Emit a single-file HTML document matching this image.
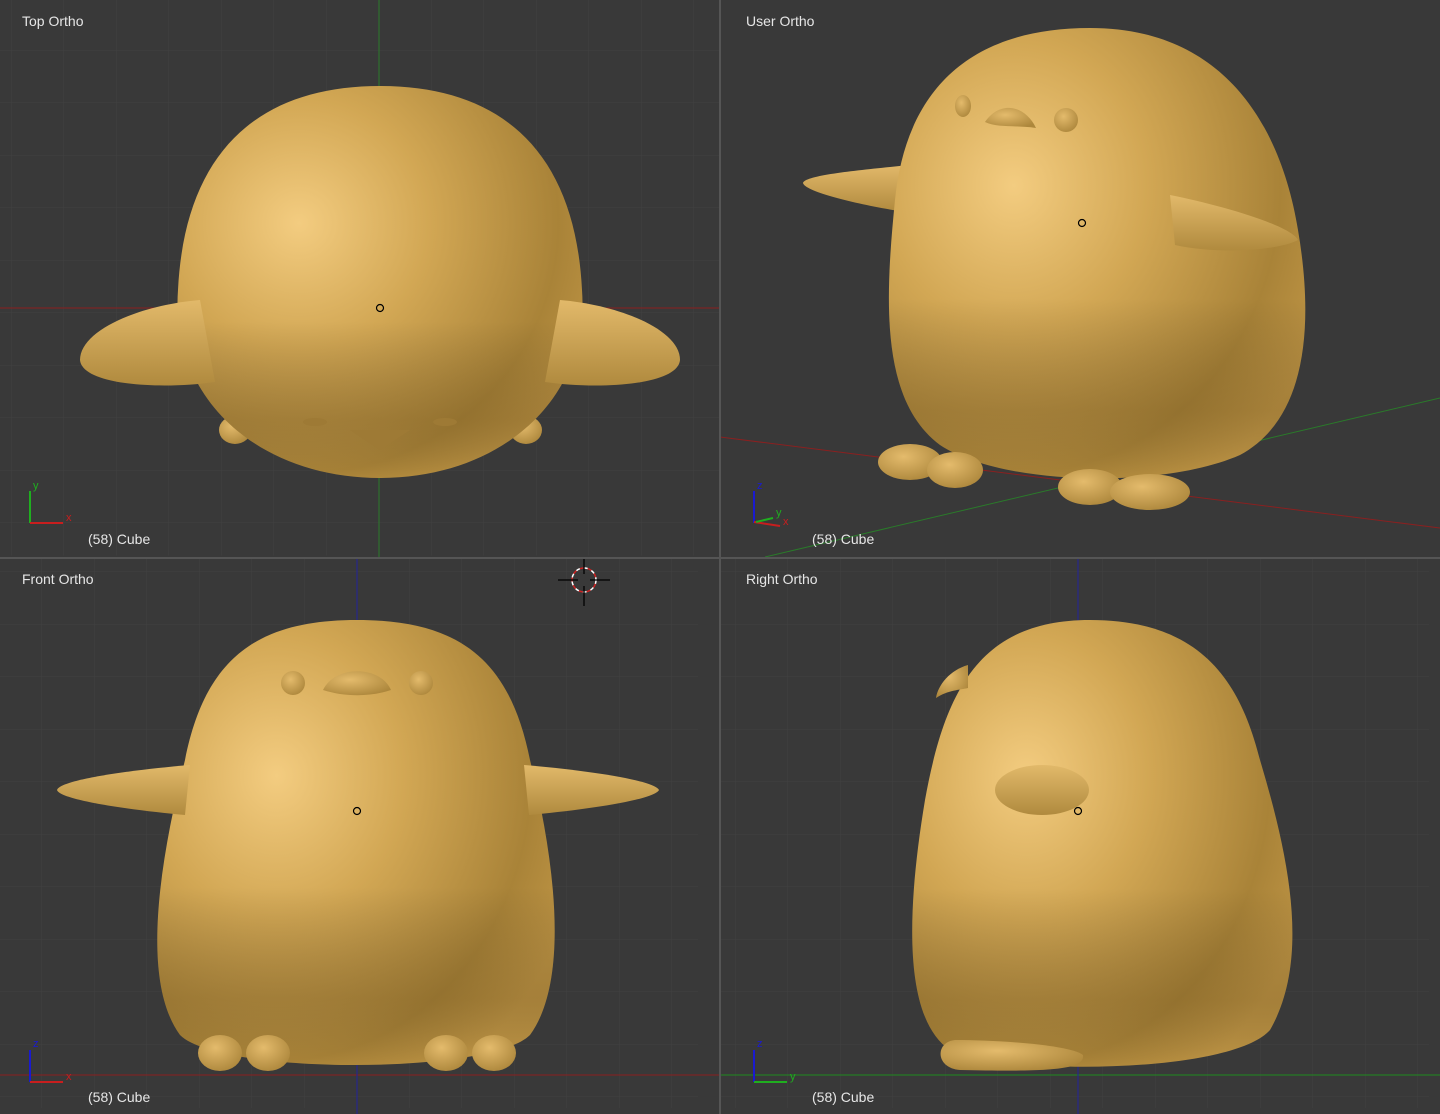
<!DOCTYPE html>
<html><head><meta charset="utf-8"><style>
body{margin:0;background:#393939;width:1440px;height:1114px;overflow:hidden;font-family:"Liberation Sans","DejaVu Sans",sans-serif}
svg{position:absolute;left:0;top:0}
.t{position:absolute;color:#e6e6e6;font-size:14px}
</style></head><body>
<svg width="1440" height="1114" viewBox="0 0 1440 1114">
<defs>
<radialGradient id="g" cx="0.3" cy="0.35" r="0.8">
<stop offset="0" stop-color="#f3cc80"/><stop offset="0.4" stop-color="#d2a754"/><stop offset="0.8" stop-color="#a98338"/><stop offset="1" stop-color="#bf9545"/></radialGradient>
<linearGradient id="shade" x1="0" y1="0" x2="0" y2="1"><stop offset="0.6" stop-color="#000" stop-opacity="0"/><stop offset="0.85" stop-color="#4a3510" stop-opacity="0.22"/><stop offset="1" stop-color="#000" stop-opacity="0"/></linearGradient>
<linearGradient id="w" x1="0" y1="0" x2="0" y2="1"><stop offset="0" stop-color="#e2b96a"/><stop offset="1" stop-color="#b08a3e"/></linearGradient>
<radialGradient id="f" cx="0.4" cy="0.35" r="0.7"><stop offset="0" stop-color="#e4bb6c"/><stop offset="1" stop-color="#ad873c"/></radialGradient>
<pattern id="gr1" x="11" y="0" width="52.5" height="52.5" patternUnits="userSpaceOnUse"><path d="M0 0V52.5M0 0H52.5" stroke="#414141" stroke-width="1" fill="none"/></pattern>
<clipPath id="c1"><rect x="0" y="0" width="719" height="557"/></clipPath>
<clipPath id="c2"><rect x="721" y="0" width="719" height="557"/></clipPath>
<clipPath id="c3"><rect x="0" y="559" width="719" height="555"/></clipPath>
<clipPath id="c4"><rect x="721" y="559" width="719" height="555"/></clipPath>
</defs>
<rect width="1440" height="1114" fill="#393939"/>
<g clip-path="url(#c1)"><rect x="0" y="0" width="720" height="558" fill="url(#gr1)" transform="translate(0,-2.5)"/></g>
<g clip-path="url(#c3)"><rect x="0" y="0" width="720" height="1114" fill="url(#gr1)" transform="translate(-22,-6)"/></g>
<g clip-path="url(#c4)"><rect x="0" y="0" width="1440" height="1114" fill="url(#gr1)" transform="translate(-11,-6)"/></g>
<rect x="0" y="557" width="1440" height="2" fill="#555"/>
<rect x="719" y="0" width="2" height="1114" fill="#555"/>

<g clip-path="url(#c1)">
<line x1="0" y1="308" x2="719" y2="308" stroke="#8a2020" stroke-width="1"/>
<line x1="379" y1="0" x2="379" y2="557" stroke="#2a7a2a" stroke-width="1"/>
<ellipse cx="235" cy="430" rx="16" ry="14" fill="url(#f)"/>
<ellipse cx="526" cy="430" rx="16" ry="14" fill="url(#f)"/>
<path d="M380 86 C500 86 575 150 582 290 C590 400 500 478 380 478 C260 478 170 400 178 290 C185 150 260 86 380 86Z" fill="url(#g)"/>
<path d="M380 86 C500 86 575 150 582 290 C590 400 500 478 380 478 C260 478 170 400 178 290 C185 150 260 86 380 86Z" fill="url(#shade)"/>
<path d="M200 300 C140 305 80 330 80 360 C82 385 160 390 215 382Z" fill="url(#w)"/>
<path d="M560 300 C620 305 680 330 680 360 C678 385 600 390 545 382Z" fill="url(#w)"/>
<path d="M350 430 L380 450 L410 430 Z" fill="#9e7a35"/>
<ellipse cx="315" cy="422" rx="12" ry="4" fill="#9e7a35"/><ellipse cx="445" cy="422" rx="12" ry="4" fill="#9e7a35"/>
<circle cx="380" cy="308" r="3.5" fill="none" stroke="#000" stroke-width="1.2"/>
<line x1="30" y1="523" x2="30" y2="491" stroke="#1fae1f" stroke-width="2"/><line x1="30" y1="523" x2="63" y2="523" stroke="#c81e1e" stroke-width="2"/>
<text x="33" y="489" fill="#1fae1f" font-size="11" font-family="Liberation Sans">y</text><text x="66" y="521" fill="#c81e1e" font-size="11" font-family="Liberation Sans">x</text>
</g>

<g clip-path="url(#c2)">
<line x1="720" y1="437" x2="1440" y2="528" stroke="#8a2020" stroke-width="1"/>
<line x1="765" y1="557" x2="1440" y2="398" stroke="#2a7a2a" stroke-width="1"/>
<path d="M910 165 C860 170 805 175 803 183 C805 192 860 205 905 212Z" fill="url(#w)"/>
<path d="M1090 28 C1220 28 1280 120 1298 230 C1315 330 1305 420 1240 455 C1160 490 1000 485 940 445 C880 400 885 300 895 200 C905 100 960 28 1090 28Z" fill="url(#g)"/>
<path d="M1090 28 C1220 28 1280 120 1298 230 C1315 330 1305 420 1240 455 C1160 490 1000 485 940 445 C880 400 885 300 895 200 C905 100 960 28 1090 28Z" fill="url(#shade)"/>
<path d="M1170 195 C1220 205 1290 225 1298 240 C1280 250 1220 255 1175 245Z" fill="url(#w)"/>
<ellipse cx="910" cy="462" rx="32" ry="18" fill="url(#f)"/><ellipse cx="955" cy="470" rx="28" ry="18" fill="url(#f)"/>
<ellipse cx="1090" cy="487" rx="32" ry="18" fill="url(#f)"/><ellipse cx="1150" cy="492" rx="40" ry="18" fill="url(#f)"/>
<ellipse cx="963" cy="106" rx="8" ry="11" fill="url(#f)"/><circle cx="1066" cy="120" r="12" fill="url(#f)"/>
<path d="M985 122 C1000 100 1025 105 1036 128 C1015 125 998 128 985 122Z" fill="url(#f)"/>
<circle cx="1082" cy="223" r="3.5" fill="none" stroke="#000" stroke-width="1.2"/>
<line x1="754" y1="523" x2="754" y2="491" stroke="#1a1ad0" stroke-width="2"/><line x1="754" y1="522" x2="780" y2="526" stroke="#c81e1e" stroke-width="2"/><line x1="756" y1="522" x2="773" y2="518" stroke="#1fae1f" stroke-width="2"/>
<text x="757" y="489" fill="#1a1ad0" font-size="11" font-family="Liberation Sans">z</text><text x="776" y="516" fill="#1fae1f" font-size="11" font-family="Liberation Sans">y</text><text x="783" y="525" fill="#c81e1e" font-size="11" font-family="Liberation Sans">x</text>
</g>

<g clip-path="url(#c3)">
<line x1="0" y1="1075" x2="719" y2="1075" stroke="#8a2020" stroke-width="1"/>
<line x1="357" y1="559" x2="357" y2="1114" stroke="#22229a" stroke-width="1"/>
<path d="M357 620 C460 620 510 660 530 760 C555 860 570 980 530 1035 C490 1075 220 1075 180 1035 C140 980 160 860 185 760 C205 660 255 620 357 620Z" fill="url(#g)"/>
<path d="M357 620 C460 620 510 660 530 760 C555 860 570 980 530 1035 C490 1075 220 1075 180 1035 C140 980 160 860 185 760 C205 660 255 620 357 620Z" fill="url(#shade)"/>
<path d="M190 765 C130 770 60 780 57 790 C60 800 130 810 185 815Z" fill="url(#w)"/>
<path d="M524 765 C584 770 654 780 659 790 C654 800 584 810 529 815Z" fill="url(#w)"/>
<ellipse cx="220" cy="1053" rx="22" ry="18" fill="url(#f)"/><ellipse cx="268" cy="1053" rx="22" ry="18" fill="url(#f)"/>
<ellipse cx="446" cy="1053" rx="22" ry="18" fill="url(#f)"/><ellipse cx="494" cy="1053" rx="22" ry="18" fill="url(#f)"/>
<circle cx="293" cy="683" r="12" fill="url(#f)"/><circle cx="421" cy="683" r="12" fill="url(#f)"/>
<path d="M323 690 C335 665 380 665 391 690 C370 697 345 697 323 690Z" fill="url(#f)"/>
<circle cx="357" cy="811" r="3.5" fill="none" stroke="#000" stroke-width="1.2"/>
<line x1="30" y1="1082" x2="30" y2="1050" stroke="#1a1ad0" stroke-width="2"/><line x1="30" y1="1082" x2="63" y2="1082" stroke="#c81e1e" stroke-width="2"/>
<text x="33" y="1047" fill="#1a1ad0" font-size="11" font-family="Liberation Sans">z</text><text x="66" y="1080" fill="#c81e1e" font-size="11" font-family="Liberation Sans">x</text>
<circle cx="584" cy="580" r="12" fill="none" stroke="#fff" stroke-width="1.5" stroke-dasharray="4 4"/>
<circle cx="584" cy="580" r="12" fill="none" stroke="#d02020" stroke-width="1.5" stroke-dasharray="4 4" stroke-dashoffset="4"/>
<path d="M558 580H578M590 580H610M584 558V574M584 586V606" stroke="#000" stroke-width="1.3"/>
</g>

<g clip-path="url(#c4)">
<line x1="720" y1="1075" x2="1440" y2="1075" stroke="#1f8a1f" stroke-width="1"/>
<line x1="1078" y1="559" x2="1078" y2="1114" stroke="#22229a" stroke-width="1"/>
<path d="M1090 620 C1200 620 1240 680 1260 760 C1290 860 1310 960 1270 1030 C1230 1075 1000 1075 950 1050 C905 1020 905 920 925 800 C945 690 980 620 1090 620Z" fill="url(#g)"/>
<path d="M1090 620 C1200 620 1240 680 1260 760 C1290 860 1310 960 1270 1030 C1230 1075 1000 1075 950 1050 C905 1020 905 920 925 800 C945 690 980 620 1090 620Z" fill="url(#shade)"/>
<path d="M968 665 C950 670 938 685 936 698 C948 690 960 690 968 688Z" fill="url(#f)"/>
<ellipse cx="1042" cy="790" rx="47" ry="25" fill="url(#w)"/>
<path d="M955 1040 C1000 1040 1070 1045 1083 1055 C1085 1070 1050 1072 960 1070 C935 1068 935 1042 955 1040Z" fill="url(#f)"/>
<circle cx="1078" cy="811" r="3.5" fill="none" stroke="#000" stroke-width="1.2"/>
<line x1="754" y1="1082" x2="754" y2="1050" stroke="#1a1ad0" stroke-width="2"/><line x1="754" y1="1082" x2="787" y2="1082" stroke="#1fae1f" stroke-width="2"/>
<text x="757" y="1047" fill="#1a1ad0" font-size="11" font-family="Liberation Sans">z</text><text x="790" y="1080" fill="#1fae1f" font-size="11" font-family="Liberation Sans">y</text>
</g>
</svg>
<div class="t" style="left:22px;top:13px">Top Ortho</div>
<div class="t" style="left:746px;top:13px">User Ortho</div>
<div class="t" style="left:22px;top:571px">Front Ortho</div>
<div class="t" style="left:746px;top:571px">Right Ortho</div>
<div class="t" style="left:88px;top:531px">(58) Cube</div>
<div class="t" style="left:812px;top:531px">(58) Cube</div>
<div class="t" style="left:88px;top:1089px">(58) Cube</div>
<div class="t" style="left:812px;top:1089px">(58) Cube</div>
</body></html>
